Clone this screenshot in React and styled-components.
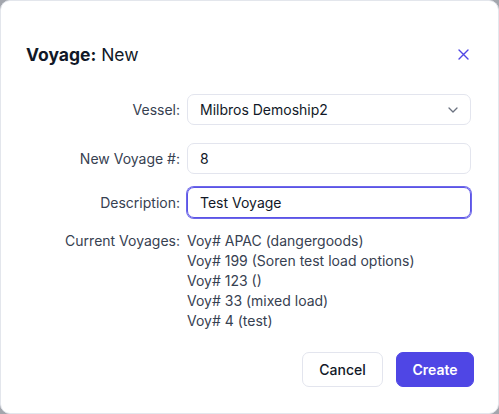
import React from "react";
import styled, { createGlobalStyle } from "styled-components";

const Global = createGlobalStyle`
  html, body { margin: 0; padding: 0; height: 100%; }
  body {
    background: #a3a6ad;
    font-family: Inter, "Noto Sans", "Liberation Sans", sans-serif;
  }
  #root { height: 100%; }
`;

const Dialog = styled.div`
  box-sizing: border-box;
  width: 499px;
  height: 414px;
  background: #fff;
  border: 1px solid #e3e6ec;
  border-radius: 10px;
  padding: 41px 27px 0 25px;
  display: flex;
  flex-direction: column;
`;

const Header = styled.div`
  display: flex;
  align-items: center;
  justify-content: space-between;
  height: 24px;
  margin-bottom: 28px;
`;

const Title = styled.h2`
  margin: 0;
  font-size: 17.5px;
  font-weight: 400;
  color: #111827;
  b { font-weight: 700; }
`;

const Close = styled.button`
  border: 0;
  background: none;
  padding: 0;
  margin-right: 2px;
  color: #4f46e5;
  display: flex;
  cursor: pointer;
`;

const Row = styled.div`
  display: grid;
  grid-template-columns: 154px 1fr;
  column-gap: 7px;
  align-items: ${(p) => (p.$top ? "start" : "center")};
  margin-bottom: ${(p) => p.$space || 0}px;
`;

const Label = styled.label`
  justify-self: end;
  font-size: 14px;
  line-height: 20px;
  color: #374151;
`;

const Box = styled.div`
  box-sizing: border-box;
  height: 31px;
  border: 1px solid ${(p) => (p.$focus ? "#5b54e6" : "#e3e5ee")};
  box-shadow: ${(p) => (p.$focus ? "0 0 0 1px #6d67ea" : "none")};
  border-radius: 7px;
  padding: 0 12px;
  display: flex;
  align-items: center;
  justify-content: space-between;
  font-size: 14px;
  color: #111827;
`;

const List = styled.div`
  font-size: 14px;
  line-height: 20px;
  color: #374151;
`;

const Footer = styled.div`
  margin-top: 21px;
  margin-right: -3px;
  display: flex;
  justify-content: flex-end;
  gap: 13px;
`;

const Button = styled.button`
  box-sizing: border-box;
  height: 35px;
  width: ${(p) => (p.$primary ? 78 : 81)}px;
  padding: 0;
  border-radius: 7px;
  font-family: inherit;
  font-size: 14px;
  font-weight: ${(p) => (p.$primary ? 600 : 500)};
  border: 1px solid ${(p) => (p.$primary ? "#4f46e5" : "#e3e5ee")};
  background: ${(p) => (p.$primary ? "#4f46e5" : "#fff")};
  color: ${(p) => (p.$primary ? "#fff" : "#111827")};
`;

const voyages = [
  "Voy# APAC (dangergoods)",
  "Voy# 199 (Soren test load options)",
  "Voy# 123 ()",
  "Voy# 33 (mixed load)",
  "Voy# 4 (test)",
];

export default function App() {
  return (
    <>
      <Global />
      <Dialog>
        <Header>
          <Title>
            <b>Voyage:</b> New
          </Title>
          <Close>
            <svg width="11" height="11" viewBox="0 0 11 11" fill="none" stroke="currentColor" strokeWidth="1.4" strokeLinecap="round">
              <path d="M1 1l9 9M10 1l-9 9" />
            </svg>
          </Close>
        </Header>
        <Row $space={18}>
          <Label>Vessel:</Label>
          <Box>
            Milbros Demoship2
            <svg width="10" height="6" viewBox="0 0 10 6" fill="none" stroke="#6b7280" strokeWidth="1.3" strokeLinecap="round" strokeLinejoin="round">
              <path d="M1 1l4 4 4-4" />
            </svg>
          </Box>
        </Row>
        <Row $space={13}>
          <Label>New Voyage #:</Label>
          <Box>8</Box>
        </Row>
        <Row $space={13}>
          <Label>Description:</Label>
          <Box $focus>Test Voyage</Box>
        </Row>
        <Row $top>
          <Label>Current Voyages:</Label>
          <List>
            {voyages.map((v) => (
              <div key={v}>{v}</div>
            ))}
          </List>
        </Row>
        <Footer>
          <Button>Cancel</Button>
          <Button $primary>Create</Button>
        </Footer>
      </Dialog>
    </>
  );
}
